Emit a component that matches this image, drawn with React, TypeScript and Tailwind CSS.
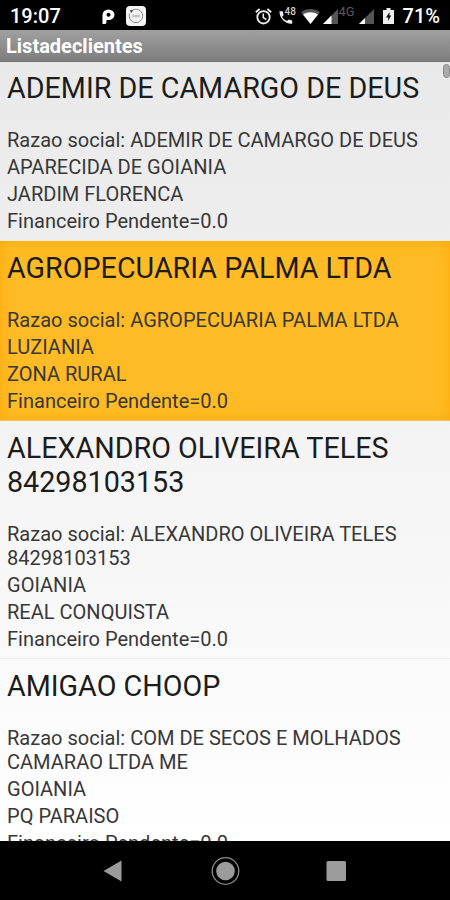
import React from 'react';

interface Client {
  name: string;
  razaoSocial: string;
  city: string;
  district: string;
  pending: string;
  selected?: boolean;
}

const clients: Client[] = [
  {
    name: 'ADEMIR DE CAMARGO DE DEUS',
    razaoSocial: 'ADEMIR DE CAMARGO DE DEUS',
    city: 'APARECIDA DE GOIANIA',
    district: 'JARDIM FLORENCA',
    pending: '0.0',
  },
  {
    name: 'AGROPECUARIA PALMA LTDA',
    razaoSocial: 'AGROPECUARIA PALMA LTDA',
    city: 'LUZIANIA',
    district: 'ZONA RURAL',
    pending: '0.0',
    selected: true,
  },
  {
    name: 'ALEXANDRO OLIVEIRA TELES 84298103153',
    razaoSocial: 'ALEXANDRO OLIVEIRA TELES 84298103153',
    city: 'GOIANIA',
    district: 'REAL CONQUISTA',
    pending: '0.0',
  },
  {
    name: 'AMIGAO CHOOP',
    razaoSocial: 'COM DE SECOS E MOLHADOS CAMARAO LTDA ME',
    city: 'GOIANIA',
    district: 'PQ PARAISO',
    pending: '0.0',
  },
];

const StatusBar: React.FC = () => (
  <div className="flex h-[30px] shrink-0 items-center bg-black pl-[10px] pr-[10px] pt-[2px] text-white">
    <span className="w-[92px] text-[20px] font-medium leading-6">19:07</span>
    <svg className="mr-[11px]" width="13" height="15" viewBox="0 0 13 15">
      <path
        fillRule="evenodd"
        d="M.5 15V6A6 5.500 0 0 1 6.500.5a6 5.300 0 0 1 0 10.600L4.500 11v2.500L3.500 15zM6.500 3.800a2 2 0 1 0 .01 0z"
        fill="#fff"
      />
    </svg>
    <svg width="20" height="20" viewBox="0 0 20 20" fill="none">
      <rect width="20" height="20" rx="4" fill="#f4f4f4" />
      <path d="M5.200 5.200a6.700 6.700 0 1 1-1.500 2.300" stroke="#888" strokeWidth="1" />
      <path d="M4 4l3.200.4L5 7z" fill="#333" />
      <path d="M6.500 10h7M7 8.500v3M10 8.500v3M13 8.500v3" stroke="#aaa" strokeWidth="1" />
    </svg>

    <div className="ml-auto flex items-center">
      <svg className="mr-[7px]" width="17" height="17" viewBox="0 0 17 17" fill="none" stroke="#eee">
        <circle cx="8.500" cy="9.300" r="6.200" strokeWidth="1.800" />
        <path d="M8.300 5.500v4.200l3 1.800" strokeWidth="1.500" />
        <path d="M.8 4.200 4.600 1M16.200 4.200 12.400 1" strokeWidth="1.800" />
      </svg>
      <div className="relative mr-[4px] h-[17px] w-[18px]">
        <svg width="18" height="17" viewBox="0 0 18 17">
          <path
            d="M.5 3.200h3.200l.9 4-1.600 1.700a11 11 0 0 0 4.800 4.200l2-1.600 3.400.9v3.300C6.500 16.300.200 10 .5 3.200z"
            fill="#eee"
          />
        </svg>
        <span className="absolute left-[6px] top-[-1px] text-[10px] font-medium leading-[10px] text-[#ccc]">48</span>
      </div>
      <svg className="mr-[3px]" width="19" height="15" viewBox="0 0 19 15">
        <path d="M0 3.200C5.500-1 13.500-1 19 3.200L9.500 15z" fill="#555" />
        <path d="M2 5.400C6.500 2.400 12.500 2.400 17 5.400L9.500 15z" fill="#fff" />
      </svg>
      <svg width="15" height="15" viewBox="0 0 15 15">
        <path d="M0 15 15 0v15z" fill="#555" />
        <path d="M0 15 8.500 6.500V15z" fill="#fff" />
      </svg>
      <span className="mr-[1px] w-[20px] self-start pl-[1px] text-[13px] leading-[15px] text-[#5a5a5a]">4G</span>
      <svg className="mr-[9px]" width="15" height="15" viewBox="0 0 15 15">
        <path d="M0 15 15 0v15z" fill="#555" />
        <path d="M0 15 6 9V15z" fill="#fff" />
      </svg>
      <svg className="mr-[9px]" width="11" height="16" viewBox="0 0 11 16">
        <path d="M3.500 0h4v2H11v14H0V2h3.500z" fill="#eee" />
        <path d="M6.500 4 3 9.500h2.200V13l3-5.500H6.500z" fill="#111" />
      </svg>
      <span className="text-[20px] font-medium leading-6">71%</span>
    </div>
  </div>
);

const ClientRow: React.FC<{ client: Client }> = ({ client }) => (
  <div
    className={`border-b px-[7px] pb-[7px] pt-[10px] ${
      client.selected
        ? 'border-[#f9bd55] bg-[#ffbb25] shadow-[inset_0_0_12px_2px_#ffad0d]'
        : 'border-[#ededed]'
    }`}
  >
    <h2 className="w-[425px] text-[28.7px] leading-[34px] text-[#1c1c1c]">{client.name}</h2>
    <div className="mt-[23px] flex w-[425px] flex-col gap-[3px] text-[20.05px] leading-[24px] text-[#383838]">
      <p>Razao social: {client.razaoSocial}</p>
      <p>{client.city}</p>
      <p>{client.district}</p>
      <p>Financeiro Pendente={client.pending}</p>
    </div>
  </div>
);

const NavBar: React.FC = () => (
  <div className="flex h-[59px] shrink-0 items-center justify-center bg-black">
    <svg width="244" height="30" viewBox="0 0 244 30">
      <path d="M.5 15 18.500 4.500v21z" fill="#9b9b9b" />
      <circle cx="122.500" cy="15" r="13.300" fill="none" stroke="#8a8a8a" strokeWidth="1.300" />
      <circle cx="122.500" cy="15" r="9.300" fill="#9b9b9b" />
      <rect x="223.500" y="5" width="19.500" height="20" rx="1.500" fill="#9b9b9b" />
    </svg>
  </div>
);

export default function App() {
  return (
    <div className="flex h-[900px] w-[450px] flex-col overflow-hidden bg-black font-['Roboto','Noto_Sans',sans-serif]">
      <StatusBar />
      <header className="flex h-[32px] shrink-0 items-center border-b border-[#777] bg-linear-to-b from-[#a0a0a0] to-[#7e7e7e] px-[6px]">
        <h1 className="text-[20px] font-bold leading-6 text-white">Listadeclientes</h1>
      </header>
      <main className="relative min-h-0 flex-1 overflow-hidden bg-linear-to-b from-[#e9e9e9] to-white">
        {/* list is scrolled by a hair, so the first row starts under the title bar */}
        <div className="-mt-px">
          {clients.map((client) => (
            <ClientRow key={client.name} client={client} />
          ))}
        </div>
        {/* scroll thumb */}
        <div className="absolute right-0 top-[2px] h-[14px] w-[7px] rounded-full border border-[#888] bg-[#aaa]" />
      </main>
      <NavBar />
    </div>
  );
}
